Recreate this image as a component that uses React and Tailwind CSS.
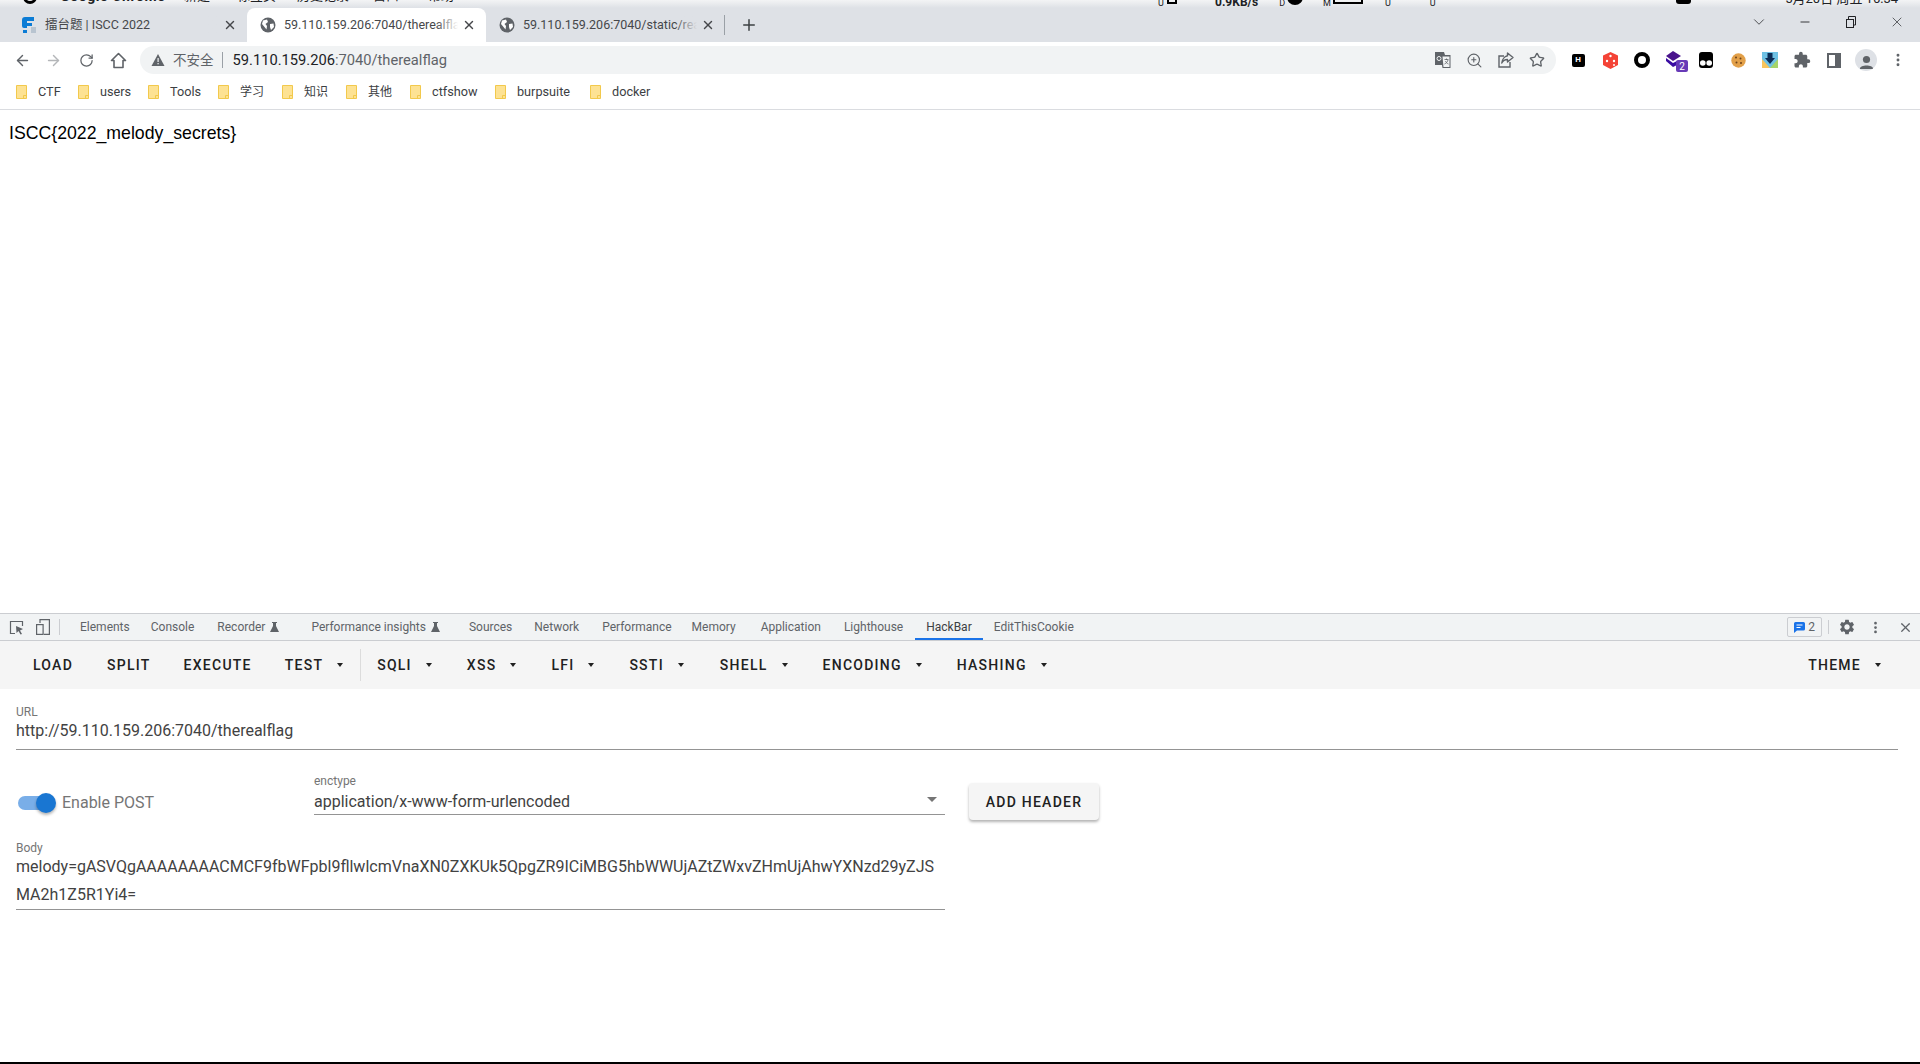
import { ArrowLeft, ArrowRight, RotateCw, X, Plus, ChevronDown, Minus, ZoomIn, Star, MoreVertical } from "lucide-react"
import { MdSettings, MdExtension } from "react-icons/md"

const font = { fontFamily: "Roboto, 'Noto Sans CJK SC', sans-serif" }

function Globe() {
    return (
        <svg width="16" height="16" viewBox="0 0 16 16" className="shrink-0">
            <circle cx="8" cy="8" r="7.5" fill="#5f6368" />
            <path d="M3 3.5 L7 2.5 L8 5 L5.5 7 L7 9 L6.5 12.5 L4.5 10 L2 7 Z M10 7 L13.5 6.5 L14 10 L11 13 L10 10 Z" fill="#fff" />
        </svg>
    )
}

function Tab({ active, icon, title }) {
    return (
        <div className={`flex h-[34px] w-[239px] shrink-0 items-center pl-[13px] pr-[6px] ${active ? "rounded-t-[8px] bg-white" : ""}`}>
            {icon}
            <span className="relative ml-[8px] w-[174px] overflow-hidden whitespace-nowrap text-[12.5px] text-[#45474a]">
                {title}
                <span className={`absolute inset-y-0 right-0 w-[22px] bg-linear-to-l ${active ? "from-white" : "from-[#dee1e6]"} to-transparent`} />
            </span>
            <X size={14} strokeWidth={2.4} className="ml-auto mr-[4px] text-[#45474a]" />
        </div>
    )
}

function Bookmark({ name, width, cjk }) {
    return (
        <div className="flex items-center pt-[1px]" style={{ width }}>
            <svg width="11" height="14" viewBox="0 0 11 14" className="shrink-0">
                <path d="M.5.5 H10.5 V13.5 H.5 Z" fill="#fde293" stroke="#f2c94c" />
                <path d="M7.5 13.5 V10.5 H10.5" fill="none" stroke="#f2c94c" />
            </svg>
            <span className={`ml-[11px] text-[#3c4043] ${cjk ? "text-[12px]" : "text-[12.7px]"}`}>{name}</span>
        </div>
    )
}

function ExtIcons() {
    return (
        <div className="ml-[6px] flex items-center">
            <div className="flex w-[32px] justify-center">
                <div className="flex h-[13px] w-[13px] items-center justify-center rounded-[2px] bg-black text-[8px] font-bold text-white">H</div>
            </div>
            <div className="flex w-[32px] justify-center">
                <svg width="17" height="17" viewBox="0 0 17 17">
                    <path d="M8.5 0 L16 3.5 V13 L8.5 17 L1 13 V3.5 Z" fill="#f44336" />
                    <circle cx="8.5" cy="4" r="1.2" fill="#fff" />
                    <circle cx="5" cy="9" r="1.2" fill="#fff" />
                    <circle cx="12" cy="9" r="1.2" fill="#fff" />
                    <circle cx="12" cy="13" r="1" fill="#fff" />
                </svg>
            </div>
            <div className="flex w-[32px] justify-center">
                <div className="h-[16px] w-[16px] rounded-full border-[4px] border-black" />
            </div>
            <div className="relative flex w-[32px] justify-center">
                <svg width="18" height="18" viewBox="0 0 18 18">
                    <path d="M8 0 L16 5 L8 10 L1 5 Z" fill="#4a148c" />
                    <path d="M1 7 L8 12 L12 10 L12 14 L8 16 L1 10 Z" fill="#3a0ca3" />
                </svg>
                <div className="absolute left-[18px] top-[9px] flex h-[12px] w-[12px] items-center justify-center rounded-[2px] bg-[#673ab7] text-[10px] text-white">2</div>
            </div>
            <div className="flex w-[32px] justify-center">
                <svg width="14" height="16" viewBox="0 0 14 16">
                    <rect width="14" height="16" rx="3" fill="#000" />
                    <circle cx="3.8" cy="11" r="2.8" fill="#fff" />
                    <circle cx="10.2" cy="11" r="2.8" fill="#fff" />
                </svg>
            </div>
            <div className="flex w-[32px] justify-center">
                <svg width="15" height="15" viewBox="0 0 15 15">
                    <circle cx="7.5" cy="7.5" r="7.2" fill="#e2a049" />
                    <circle cx="5" cy="4.5" r="1" fill="#6d4019" />
                    <circle cx="9.5" cy="5.5" r="1" fill="#6d4019" />
                    <circle cx="5.5" cy="9.5" r="1" fill="#6d4019" />
                    <circle cx="10" cy="10" r="1" fill="#6d4019" />
                </svg>
            </div>
            <div className="flex w-[32px] justify-center">
                <svg width="16" height="16" viewBox="0 0 16 16">
                    <rect width="16" height="16" fill="#6ec1e4" />
                    <path d="M0 7 L8 16 H0 Z" fill="#f8c45c" />
                    <path d="M16 7 L8 16 H16 Z" fill="#a5d46a" />
                    <path d="M5.5 1 H10.5 V6 H13 L8 12 L3 6 H5.5 Z" fill="#0d2c54" />
                </svg>
            </div>
            <div className="flex w-[32px] justify-center">
                <MdExtension size={18} className="text-[#5f6368]" />
            </div>
            <div className="flex w-[32px] justify-center">
                <div className="h-[15px] w-[14px] border-[2.5px] border-r-[6px] border-[#5f6368]" />
            </div>
            <div className="flex w-[32px] justify-center">
                <div className="flex h-[22px] w-[22px] items-end justify-center overflow-hidden rounded-full bg-[#dee1e6]">
                    <svg width="15" height="18" viewBox="0 0 15 18">
                        <circle cx="7.5" cy="6.5" r="3.6" fill="#5f6368" />
                        <path d="M1 15.5 C1 11.5 14 11.5 14 15.5 V16 H1 Z" fill="#5f6368" />
                    </svg>
                </div>
            </div>
            <div className="flex w-[32px] justify-center">
                <MoreVertical size={16} strokeWidth={2.4} className="text-[#5f6368]" />
            </div>
        </div>
    )
}

function DevTab({ children, flask, active, className = "" }) {
    return (
        <div className={`relative flex h-full items-center whitespace-nowrap text-[12px] ${active ? "text-[#3c4043]" : "text-[#5f6368]"} ${className}`}>
            {children}
            {flask && (
                <svg width="9" height="10" viewBox="0 0 9 10" className="ml-[5px]">
                    <path d="M2 0 H7 V1 H6 V4 L9 10 H0 L3 4 V1 H2 Z" fill="#5f6368" />
                </svg>
            )}
            {active && <div className="absolute bottom-0 left-0 right-0 h-[2px] bg-[#1a73e8]" />}
        </div>
    )
}

function HackButton({ label, menu, className = "" }) {
    return (
        <div className={`flex items-center whitespace-nowrap text-[14px] font-medium tracking-[1.25px] text-[#212121] ${className}`}>
            {label}
            {menu && <span className="ml-[14px] h-0 w-0 border-x-[3.5px] border-t-[4px] border-x-transparent border-t-[#212121]" />}
        </div>
    )
}

export default function App() {
    return (
        <div className="flex h-[1064px] w-[1920px] flex-col overflow-hidden bg-white" style={font}>
            {/* os menu bar, only the bottom of it is on screen */}
            <div className="flex h-[8px] shrink-0 items-end overflow-hidden whitespace-nowrap bg-linear-to-b from-[#f3f4f5] to-[#dee1e6] pb-[4px] text-[13px] leading-[16px] text-[#202124]">
                <span className="ml-[23px] h-[14px] w-[14px] shrink-0 rounded-full border-[3px] border-black" />
                <span className="ml-[23px] w-[101px] shrink-0 text-[14px] font-bold tracking-[0.6px]">Google Chrome</span>
                <span className="ml-[23px] w-[53px] shrink-0">新建</span>
                <span className="w-[60px] shrink-0">标签页</span>
                <span className="w-[76px] shrink-0">历史记录</span>
                <span className="w-[55px] shrink-0">窗口</span>
                <span className="w-[730px] shrink-0">帮助</span>
                <span className="-mb-[4px] w-[9px] shrink-0 text-[9px] leading-[10px]">U</span>
                <span className="h-[12px] w-[10px] shrink-0 border-2 border-black" />
                <span className="-mb-[4px] ml-[38px] shrink-0 text-[12px] font-bold leading-[12px]">0.9KB/s</span>
                <span className="-mb-[4px] ml-[21px] shrink-0 text-[9px] leading-[10px]">D</span>
                <span className="-mb-[1px] ml-[2px] h-[16px] w-[16px] shrink-0 rounded-full bg-black" />
                <span className="-mb-[4px] ml-[20px] shrink-0 text-[9px] leading-[10px]">M</span>
                <span className="ml-[2px] h-[14px] w-[30px] shrink-0 border-2 border-black" />
                <span className="-mb-[4px] ml-[22px] shrink-0 text-[9px] leading-[10px]">U</span>
                <span className="-mb-[4px] ml-[39px] shrink-0 text-[9px] leading-[10px]">U</span>
                <span className="ml-[240px] h-[14px] w-[15px] shrink-0 rounded-[3px] bg-black" />
                <span className="ml-auto -mb-[1px] mr-[22px] shrink-0 text-[13px] leading-[12px]">5月20日 周五 16:34</span>
            </div>

            {/* tab strip */}
            <div className="flex h-[34px] shrink-0 items-center bg-[#dee1e6] pl-[8px]">
                <Tab
                    title="擂台题 | ISCC 2022"
                    icon={
                        <svg width="16" height="18" viewBox="0 0 16 18" className="shrink-0">
                            <path d="M1 4 Q1 1 4 1 H13 V5 H6 V7 H11 V10 H6 V12 H3 Q1 12 1 10 Z" fill="#0c7cd5" />
                            <rect x="2" y="14" width="4" height="3" fill="#0c7cd5" />
                            <rect x="10" y="11" width="5" height="6" fill="#b8c4d0" />
                        </svg>
                    }
                />
                <Tab active title="59.110.159.206:7040/therealflag" icon={<Globe />} />
                <Tab title="59.110.159.206:7040/static/realflag" icon={<Globe />} />
                <div className="-ml-[1px] h-[20px] w-px bg-[#9aa0a6]" />
                <Plus size={18} strokeWidth={2} className="ml-[15px] text-[#3c4043]" />
                <div className="ml-auto -mt-[6px] flex items-center text-[#202124]">
                    <ChevronDown size={18} strokeWidth={1} />
                    <Minus size={14} strokeWidth={1.5} className="ml-[30px]" />
                    <svg width="12" height="12" viewBox="0 0 12 12" className="ml-[33px]" fill="none" stroke="#202124">
                        <rect x="1.5" y="3.5" width="7" height="8" />
                        <path d="M3.5 3 V.5 H10.5 V9 H9" />
                    </svg>
                    <X size={16} strokeWidth={1} className="ml-[32px] mr-[15px]" />
                </div>
            </div>

            {/* address row */}
            <div className="flex h-[32px] shrink-0 items-center bg-white pt-[4px]">
                <div className="flex w-[140px] shrink-0 items-center pl-[14px] text-[#5f6368]">
                    <ArrowLeft size={17} strokeWidth={2} />
                    <ArrowRight size={17} strokeWidth={2} className="ml-[14px] text-[#b4b6b9]" />
                    <RotateCw size={15} strokeWidth={2} className="ml-[17px]" />
                    <svg width="17" height="17" viewBox="0 0 17 17" fill="none" stroke="#5f6368" strokeWidth="1.6" className="ml-[16px]">
                        <path d="M8.5 1.5 L15.5 8.5 H13 V15.5 H4 V8.5 H1.5 Z" strokeLinejoin="round" />
                    </svg>
                </div>
                <div className="flex h-[28px] w-[1416px] items-center rounded-full bg-[#f1f3f4]">
                    <svg width="14" height="12" viewBox="0 0 13 12" className="ml-[11px]">
                        <path d="M6.5 0 L13 12 H0 Z" fill="#5f6368" />
                        <rect x="6" y="4" width="1.2" height="4" fill="#f1f3f4" />
                        <rect x="6" y="9" width="1.2" height="1.3" fill="#f1f3f4" />
                    </svg>
                    <span className="ml-[8px] text-[13.5px] text-[#5f6368]">不安全</span>
                    <span className="ml-[8px] h-[16px] w-px bg-[#9aa0a6]" />
                    <span className="ml-[10px] text-[14.7px] text-[#202124]">59.110.159.206<span className="text-[#5f6368]">:7040/therealflag</span></span>
                    <div className="ml-auto flex items-center gap-[15px] pr-[11px] text-[#5f6368]">
                        <svg width="16" height="16" viewBox="0 0 16 16">
                            <path d="M0 0 H9 L10 3 H15.5 V16 H7.5 L7 13 H0 Z" fill="#5f6368" />
                            <path d="M7.5 4.5 H14.5 V15 H8.5 Z" fill="#f1f3f4" />
                            <circle cx="4" cy="6.5" r="2" fill="none" stroke="#f1f3f4" />
                            <path d="M9.5 7.5 H13.5 M11.5 6.5 V8 M13 8 C12.5 10 11 11.5 9.5 12 M10.5 9 C11 10.5 12 11.5 13.5 12" stroke="#5f6368" strokeWidth=".8" fill="none" />
                        </svg>
                        <ZoomIn size={17} strokeWidth={1.6} />
                        <svg width="16" height="16" viewBox="0 0 16 16" fill="none" stroke="#5f6368" strokeWidth="1.4">
                            <path d="M6 4 H1 V15 H12 V10" />
                            <path d="M9.5 1 L15 5.5 L9.5 10 V7.5 C7 7.5 5 8.5 3.8 11 C4 7.5 6.5 4.5 9.5 3.8 Z" strokeLinejoin="round" />
                        </svg>
                        <Star size={16} strokeWidth={2} />
                    </div>
                </div>
                <ExtIcons />
            </div>

            {/* bookmarks */}
            <div className="flex h-[36px] shrink-0 items-center border-b border-[#dadce0] pl-[16px]">
                <Bookmark name="CTF" width={62} />
                <Bookmark name="users" width={70} />
                <Bookmark name="Tools" width={70} />
                <Bookmark name="学习" width={64} cjk />
                <Bookmark name="知识" width={64} cjk />
                <Bookmark name="其他" width={64} cjk />
                <Bookmark name="ctfshow" width={85} />
                <Bookmark name="burpsuite" width={95} />
                <Bookmark name="docker" width={80} />
            </div>

            {/* page */}
            <div className="h-[503px] shrink-0 px-[9px] pt-[10px] text-[17.7px] leading-[27px] text-black" style={{ fontFamily: "'Liberation Sans', sans-serif" }}>
                ISCC{"{"}2022_melody_secrets{"}"}
            </div>

            {/* devtools tabs */}
            <div className="flex h-[28px] shrink-0 items-center border-y border-[#cbcdd1] bg-[#f1f3f4] pl-[9px] pr-[7px]">
                <svg width="15" height="15" viewBox="0 0 15 15" fill="none" stroke="#5f6368" strokeWidth="1.2">
                    <path d="M6 13.5 H1.5 V1.5 H13.5 V6" />
                    <path d="M7 6 L14 9 L11 10.5 L13 14 L11.5 14.5 L9.5 11 L7.5 13 Z" fill="#5f6368" stroke="none" />
                </svg>
                <svg width="14" height="16" viewBox="0 0 14 16" fill="none" stroke="#5f6368" strokeWidth="1.2" className="ml-[12px]">
                    <path d="M4 4 V.6 H13.4 V15.4 H8" />
                    <rect x=".6" y="5.6" width="6.5" height="9.8" />
                </svg>
                <div className="ml-[9px] h-[16px] w-px bg-[#cbcdd1]" />
                <DevTab className="ml-[20px]">Elements</DevTab>
                <DevTab className="ml-[21px]">Console</DevTab>
                <DevTab className="ml-[23px]" flask>Recorder</DevTab>
                <DevTab className="ml-[32px]" flask>Performance insights</DevTab>
                <DevTab className="ml-[29px]">Sources</DevTab>
                <DevTab className="ml-[22px]">Network</DevTab>
                <DevTab className="ml-[23px]">Performance</DevTab>
                <DevTab className="ml-[20px]">Memory</DevTab>
                <DevTab className="ml-[25px]">Application</DevTab>
                <DevTab className="ml-[23px]">Lighthouse</DevTab>
                <DevTab className="ml-[12px] px-[11px]" active>HackBar</DevTab>
                <DevTab className="ml-[11px]">EditThisCookie</DevTab>
                <div className="ml-auto flex items-center">
                    <div className="flex h-[20px] w-[35px] items-center justify-center gap-[3px] rounded-[2px] border border-[#cbcdd1] text-[12px] text-[#5f6368]">
                        <svg width="11" height="11" viewBox="0 0 11 11">
                            <path d="M1.5 0 H9.5 Q11 0 11 1.5 V7 Q11 8.5 9.5 8.5 H3 L0 11 V1.5 Q0 0 1.5 0 Z" fill="#1a73e8" />
                            <path d="M2.5 3 H8.5 M2.5 5.5 H6.5" stroke="#fff" />
                        </svg>
                        2
                    </div>
                    <div className="ml-[6px] h-[14px] w-px bg-[#cbcdd1]" />
                    <MdSettings size={18} className="ml-[9px] text-[#5f6368]" />
                    <MoreVertical size={15} strokeWidth={2.4} className="ml-[12px] text-[#5f6368]" />
                    <X size={15} strokeWidth={2} className="ml-[15px] text-[#5f6368]" />
                </div>
            </div>

            {/* hackbar toolbar */}
            <div className="flex h-[48px] shrink-0 items-center bg-[#f5f5f5] pl-[33px] pr-[39px]">
                <HackButton label="LOAD" />
                <HackButton label="SPLIT" className="ml-[34px]" />
                <HackButton label="EXECUTE" className="ml-[33px]" />
                <HackButton label="TEST" menu className="ml-[33px]" />
                <div className="ml-[17px] h-[32px] w-px bg-[#dcdcdc]" />
                <HackButton label="SQLI" menu className="ml-[16px]" />
                <HackButton label="XSS" menu className="ml-[35px]" />
                <HackButton label="LFI" menu className="ml-[35px]" />
                <HackButton label="SSTI" menu className="ml-[35px]" />
                <HackButton label="SHELL" menu className="ml-[36px]" />
                <HackButton label="ENCODING" menu className="ml-[35px]" />
                <HackButton label="HASHING" menu className="ml-[35px]" />
                <HackButton label="THEME" menu className="ml-auto" />
            </div>

            {/* hackbar form */}
            <div className="flex flex-1 flex-col px-[16px]">
                <div className="mt-[16px] mr-[6px] border-b border-[#949494] pb-[6px]">
                    <div className="text-[12px] leading-[14px] text-[#757575]">URL</div>
                    <div className="text-[16px] leading-[24px] text-[#424242]">http://59.110.159.206:7040/therealflag</div>
                </div>

                <div className="mt-[24px] flex items-start">
                    <div className="mt-[17px] flex w-[298px] items-center pl-[2px]">
                        <div className="relative h-[14px] w-[36px] rounded-full bg-[#79aee8]">
                            <div className="absolute -right-[2px] -top-[3px] h-[20px] w-[20px] rounded-full bg-[#1976d2] shadow-[0_2px_3px_rgba(0,0,0,0.3)]" />
                        </div>
                        <span className="ml-[8px] text-[16px] leading-[24px] text-[#757575]">Enable POST</span>
                    </div>
                    <div className="relative w-[631px] border-b border-[#949494]">
                        <div className="text-[12px] leading-[14px] text-[#757575]">enctype</div>
                        <div className="mt-[2px] text-[16px] leading-[24px] text-[#424242]">application/x-www-form-urlencoded</div>
                        <span className="absolute right-[8px] top-[23px] h-0 w-0 border-x-[5px] border-t-[5px] border-x-transparent border-t-[#757575]" />
                    </div>
                    <div className="ml-[24px] mt-[9px] flex h-[37px] w-[130px] items-center justify-center rounded-[4px] bg-[#f5f5f5] pt-[2px] text-[14px] font-medium tracking-[1.25px] text-[#212121] shadow-[0_2px_3px_rgba(0,0,0,0.3)]">
                        ADD HEADER
                    </div>
                </div>

                <div className="mt-[21px] w-[929px] border-b border-[#949494]">
                    <div className="text-[12px] leading-[14px] text-[#757575]">Body</div>
                    <div className="-mt-[2px] break-all text-[16px] leading-[28px] text-[#424242]">
                        melody=gASVQgAAAAAAAACMCF9fbWFpbl9fllwlcmVnaXN0ZXKUk5QpgZR9ICiMBG5hbWWUjAZtZWxvZHmUjAhwYXNzd29yZJS<br />MA2h1Z5R1Yi4=
                    </div>
                </div>
            </div>

            <div className="h-[2px] shrink-0 bg-black" />
        </div>
    )
}
